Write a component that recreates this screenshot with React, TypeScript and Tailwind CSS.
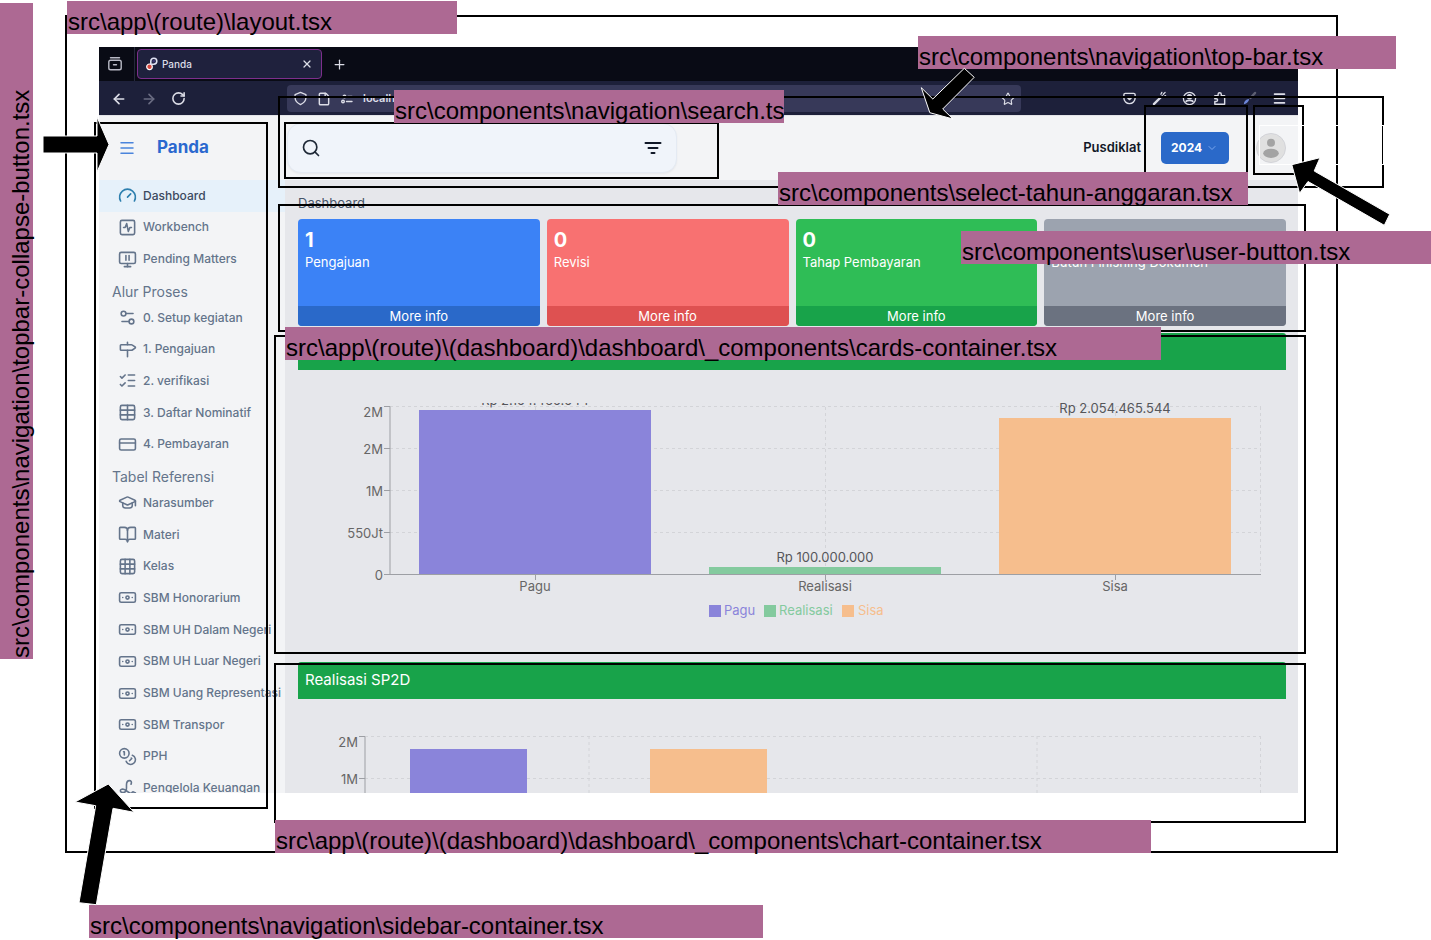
import React from "react";
import {
  ArrowLeft,
  ArrowRight,
  Banknote,
  BookOpen,
  ChevronDown,
  Coins,
  CreditCard,
  File,
  Gauge,
  GraduationCap,
  Grid3x3,
  ListChecks,
  Menu,
  Milestone,
  MonitorPause,
  Plus,
  RotateCw,
  Search,
  Settings2,
  SquareActivity,
  Star,
  Table,
  X,
} from "lucide-react";

type IconType = React.ComponentType<{ size?: number; strokeWidth?: number; className?: string }>;
type NavItem = { label: string; icon: IconType; active?: boolean };

function SignatureIcon({ size = 24, strokeWidth = 2, className }: { size?: number; strokeWidth?: number; className?: string }) {
  return (
    <svg
      width={size}
      height={size}
      viewBox="0 0 24 24"
      fill="none"
      stroke="currentColor"
      strokeWidth={strokeWidth}
      strokeLinecap="round"
      strokeLinejoin="round"
      className={className}
    >
      <path d="M16.500 6.500c1.200-3-.3-4.500-2-4.500-2.800 0-3.800 2.600-3.800 5.500 0 4.500.8 9.500-4.200 9.500-2 0-3.500-.8-3.500-2.200 0-1.600 1.800-2.300 4-1.800 4.500 1 6.500 5.500 9.500 5 1.500-.3 1.500-2 2.500-2s1.300 1.500 3 1.500" />
    </svg>
  );
}

const mainItems: NavItem[] = [
  { label: "Dashboard", icon: Gauge, active: true },
  { label: "Workbench", icon: SquareActivity },
  { label: "Pending Matters", icon: MonitorPause },
];
const processItems: NavItem[] = [
  { label: "0. Setup kegiatan", icon: Settings2 },
  { label: "1. Pengajuan", icon: Milestone },
  { label: "2. verifikasi", icon: ListChecks },
  { label: "3. Daftar Nominatif", icon: Table },
  { label: "4. Pembayaran", icon: CreditCard },
];
const referenceItems: NavItem[] = [
  { label: "Narasumber", icon: GraduationCap },
  { label: "Materi", icon: BookOpen },
  { label: "Kelas", icon: Grid3x3 },
  { label: "SBM Honorarium", icon: Banknote },
  { label: "SBM UH Dalam Negeri", icon: Banknote },
  { label: "SBM UH Luar Negeri", icon: Banknote },
  { label: "SBM Uang Representasi", icon: Banknote },
  { label: "SBM Transpor", icon: Banknote },
  { label: "PPH", icon: Coins },
  { label: "Pengelola Keuangan", icon: SignatureIcon },
];

function NavList({ items, className }: { items: NavItem[]; className: string }) {
  return (
    <ul className={`grid auto-rows-fr ${className}`}>
      {items.map(({ label, icon: Icon, active }) => (
        <li key={label} className="min-h-0">
          <a
            href="#"
            className={`flex h-full items-center gap-[6px] pl-[19px] text-[12px] font-medium whitespace-nowrap ${
              active ? "bg-[#e6f1fa] text-[#3c4a60]" : "text-[#64748b]"
            }`}
          >
            <Icon size={19} strokeWidth={2} className={`shrink-0 ${active ? "text-[#2d7fae]" : ""}`} />
            {label}
          </a>
        </li>
      ))}
    </ul>
  );
}

function NavHeading({ children }: { children: React.ReactNode }) {
  return <h2 className="h-[27px] pt-[7px] pl-[13px] text-[14px] leading-5 text-[#64748b]">{children}</h2>;
}

function Sidebar() {
  return (
    <aside className="w-[186px] shrink-0 bg-[#f3f4f6]">
      <div className="flex h-16 items-center gap-[21px] pl-[19px]">
        <button type="button" aria-label="Collapse sidebar" className="text-[#4a84dc]">
          <Menu size={18} strokeWidth={2} />
        </button>
        <span className="text-[17px] font-bold text-[#2a68cf]">Panda</span>
      </div>
      <nav>
        <NavList items={mainItems} className="h-[95px]" />
        <NavHeading>Alur Proses</NavHeading>
        <NavList items={processItems} className="h-[158px]" />
        <NavHeading>Tabel Referensi</NavHeading>
        <NavList items={referenceItems} className="h-[317px]" />
      </nav>
    </aside>
  );
}

function PandaMark() {
  return (
    <svg width="12" height="14" viewBox="0 0 12 14" fill="none">
      <circle cx="3.500" cy="9.800" r="2.800" fill="#d6453d" stroke="#fff" strokeWidth="1.200" />
      <path d="M4.800 7.500V4a3 3 0 1 1 3 3.200H4.500" stroke="#dfe0f2" strokeWidth="1.600" />
      <circle cx="7.800" cy="4.200" r="1.400" fill="#3b3470" />
    </svg>
  );
}

function BrowserChrome() {
  return (
    <div className="text-[#dcdde7]">
      <div className="flex h-[34px] items-center bg-[#090b15]">
        <div className="flex h-full w-9 items-center justify-center border-r border-[#25283c] pr-[3px]">
          <svg width="16" height="16" viewBox="0 0 16 16" fill="none" stroke="#b9bac6" strokeWidth="1.400" strokeLinecap="round">
            <path d="M3.500 1.800h9M6.500 8.700h3" />
            <rect x="1.800" y="4.300" width="12.400" height="9.500" rx="1.800" />
          </svg>
        </div>
        <div className="ml-[2px] flex h-[30px] w-[185px] items-center gap-1 rounded-[4px] border border-[#7d2f8c] bg-[#1f213d] px-2">
          <PandaMark />
          <span className="grow text-[10px] font-medium">Panda</span>
          <X size={12} strokeWidth={2.5} />
        </div>
        <Plus size={15} strokeWidth={2} className="ml-[10px]" />
      </div>
      <div className="flex h-[34px] items-center bg-[#1d203a] pt-px">
        <div className="flex w-[188px] items-center gap-[14px] pl-3">
          <ArrowLeft size={16} strokeWidth={2.5} />
          <ArrowRight size={16} strokeWidth={2.5} className="text-[#6a6c82]" />
          <RotateCw size={15} strokeWidth={2.5} />
        </div>
        <div className="flex h-[27px] grow items-center gap-[9px] rounded-[4px] bg-[#373959] px-[6px]">
          <svg width="15" height="15" viewBox="0 0 16 16" fill="none" stroke="currentColor" strokeWidth="1.400" strokeLinejoin="round">
            <path d="M8 1.500 13.800 3.800v3.200c0 3.200-2.200 5.800-5.800 7.500C4.400 12.800 2.200 10.200 2.200 7V3.800z" />
          </svg>
          <File size={14} strokeWidth={2.5} />
          <svg width="14" height="10" viewBox="0 0 14 10" fill="none" stroke="currentColor" strokeWidth="1.400" strokeLinecap="round">
            <path d="M8 2.500h4M6.500 7.500H12" />
            <circle cx="4.500" cy="2.500" r="1.300" />
            <circle cx="3" cy="7.500" r="1.300" />
          </svg>
          <span className="grow text-[11px] font-semibold">localhost:3000</span>
          <Star size={14} strokeWidth={2} />
        </div>
        <div className="flex w-[277px] items-center justify-end gap-[15px] pr-[11px]">
          <svg width="15" height="15" viewBox="0 0 16 16" fill="none" stroke="currentColor" strokeWidth="1.500" strokeLinecap="round" strokeLinejoin="round">
            <path d="M3.500 2.500h9A1.500 1.500 0 0 1 14 4v3.500a6 6 0 0 1-12 0V4a1.500 1.500 0 0 1 1.500-1.500zM5.200 6.500 8 9.200l2.800-2.700" />
          </svg>
          <svg width="15" height="15" viewBox="0 0 16 16" fill="none" stroke="currentColor" strokeLinecap="round">
            <path d="M2 14 9.500 6.500" strokeWidth="2.400" />
            <path d="M9 7 11 5M9.500 3.500 10.500 1.500M12.500 6l2-1M12 3.500 14 1.500" strokeWidth="1.400" />
          </svg>
          <svg width="15" height="15" viewBox="0 0 16 16" fill="none" stroke="currentColor" strokeWidth="1.400">
            <circle cx="8" cy="8" r="6.500" />
            <circle cx="8" cy="6" r="2.200" fill="currentColor" />
            <path d="M4 11.500c1-2 7-2 8 0" strokeWidth="2" />
          </svg>
          <svg width="15" height="15" viewBox="0 0 16 16" fill="none" stroke="currentColor" strokeWidth="1.500" strokeLinejoin="round">
            <path d="M3 5h3.500V3.500a1.700 1.700 0 0 1 3.400 0V5H13.500v9.200H3v-3h1.500a1.500 1.500 0 0 0 0-3H3z" />
          </svg>
          <svg width="15" height="15" viewBox="0 0 16 16" fill="none" strokeLinecap="round">
            <path d="M9 7.500 14 2" stroke="#5d5f72" strokeWidth="2.400" />
            <path d="M2 14c0-3 2-5 5.500-5.500C7.500 11 5 13.500 2 14z" fill="#6d86d8" />
          </svg>
          <Menu size={15} strokeWidth={2.5} />
        </div>
      </div>
    </div>
  );
}

function TopBar() {
  return (
    <header className="flex h-16 items-center bg-[#f3f4f6] pr-3 pl-[2px]">
      <form className="flex h-[50px] w-[390px] items-center rounded-[14px] border border-[#e4eaf3] bg-[#f0f4fa] px-[13px] shadow-xs">
        <Search size={20} strokeWidth={2} className="text-[#1f2937]" />
        <input type="search" aria-label="Search" className="min-w-0 grow bg-transparent px-3 text-[13px] outline-none" />
        <button type="button" aria-label="Filter">
          <svg width="20" height="20" viewBox="0 0 20 20" stroke="#111827" strokeWidth="2" strokeLinecap="round">
            <path d="M2.500 5h15M5.500 10h9M8.500 15h3" />
          </svg>
        </button>
      </form>
      <span className="ml-auto text-[13px] font-semibold text-[#111827]">Pusdiklat</span>
      <div className="relative ml-5">
        <select
          aria-label="Tahun anggaran"
          defaultValue="2024"
          className="block h-8 w-[68px] appearance-none rounded-[5px] bg-[#2a69c9] pl-[10px] text-[12px] font-bold text-white"
        >
          <option>2024</option>
          <option>2023</option>
        </select>
        <ChevronDown size={12} className="pointer-events-none absolute top-[10px] right-[11px] text-[#7ba7ee]" />
      </div>
      <button type="button" aria-label="User menu" className="ml-[27px]">
        <svg width="30" height="30" viewBox="0 0 30 30">
          <circle cx="15" cy="15" r="14.500" fill="#e0e0e0" stroke="#d2d3d8" />
          <circle cx="15" cy="9.800" r="4" fill="#a3a3a3" />
          <ellipse cx="15" cy="20.300" rx="7.800" ry="4.600" fill="#a3a3a3" />
        </svg>
      </button>
    </header>
  );
}

const cards = [
  { value: "1", label: "Pengajuan", body: "bg-[#3b82f6]", foot: "bg-[#2a69c9]" },
  { value: "0", label: "Revisi", body: "bg-[#f87171]", foot: "bg-[#de5151]" },
  { value: "0", label: "Tahap Pembayaran", body: "bg-[#2fbd56]", foot: "bg-[#18a34a]" },
  { value: "0", label: "Butuh Finishing Dokumen", body: "bg-[#9ca3af]", foot: "bg-[#6b7280]" },
];

function CardsContainer() {
  return (
    <section className="grid grid-cols-4 gap-[7px]">
      {cards.map((c) => (
        <article key={c.label} className={`flex h-[107px] flex-col overflow-hidden rounded-[4px] text-white ${c.body}`}>
          <div className="grow px-[7px] pt-[9px]">
            <p className="text-[20px] leading-6 font-bold">{c.value}</p>
            <p className="text-[13px] leading-5">{c.label}</p>
          </div>
          <a href="#" className={`block text-center text-[13px] leading-5 ${c.foot}`}>
            More info
          </a>
        </article>
      ))}
    </section>
  );
}

function BudgetChart() {
  const bars = [
    { name: "Pagu", x: 121, top: 7, fill: "#8a84da", value: "Rp 2.154.465.544" },
    { name: "Realisasi", x: 411, top: 164, fill: "#84ca9e", value: "Rp 100.000.000" },
    { name: "Sisa", x: 701, top: 15, fill: "#f6be8d", value: "Rp 2.054.465.544" },
  ];
  const ticks = [
    { y: 4, ty: 14, label: "2M" },
    { y: 46, ty: 51, label: "2M" },
    { y: 88, ty: 93, label: "1M" },
    { y: 130, ty: 135, label: "550Jt" },
    { y: 172, ty: 177, label: "0" },
  ];
  return (
    <svg viewBox="0 0 988 252" className="block w-full overflow-hidden text-[13px]">
      <g stroke="#d3d4d8" strokeDasharray="3 3">
        {ticks.map((t) => (
          <path key={t.y} d={`M92 ${t.y - 0.5}H963`} />
        ))}
        <path d="M237.500 4V172M527.500 4V172M817.500 4V172M962.500 4V172" />
      </g>
      <g fill="#666">
        {ticks.map((t) => (
          <text key={t.y} x="85" y={t.ty} textAnchor="end">
            {t.label}
          </text>
        ))}
      </g>
      {bars.map((b) => (
        <g key={b.name}>
          <rect x={b.x} y={b.top} width="232" height={172 - b.top} fill={b.fill} />
          <text x={b.x + 116} y={b.top - 5} textAnchor="middle" fill="#55565a">
            {b.value}
          </text>
          <text x={b.x + 116} y="188" textAnchor="middle" fill="#666">
            {b.name}
          </text>
        </g>
      ))}
      <path
        d="M92 3.500V172M86 3.500h6M86 45.500h6M86 87.500h6M86 129.500h6M86 171.500H963M237.500 172v5M527.500 172v5M817.500 172v5"
        stroke="#9d9fa4"
        fill="none"
      />
      <g>
        <rect x="411" y="202" width="12" height="12" fill="#8a84da" />
        <text x="426" y="212" fill="#8a84da">Pagu</text>
        <rect x="466" y="202" width="12" height="12" fill="#84ca9e" />
        <text x="481" y="212" fill="#84ca9e">Realisasi</text>
        <rect x="544" y="202" width="12" height="12" fill="#f6be8d" />
        <text x="560" y="212" fill="#f6be8d">Sisa</text>
      </g>
    </svg>
  );
}

function Sp2dChart() {
  return (
    <svg viewBox="0 0 988 200" className="block w-full text-[13px]">
      <g stroke="#d3d4d8" strokeDasharray="3 3">
        <path d="M67 4.500H963M67 46.500H963M67 88.500H963M291 4V172M739 4V172M962.500 4V172" />
      </g>
      <rect x="112" y="17" width="117" height="155" fill="#8a84da" />
      <rect x="352" y="17" width="117" height="155" fill="#f6be8d" />
      <path d="M67 4.500V172M61 4.500h6M61 46.500h6M61 88.500h6" stroke="#9d9fa4" />
      <g fill="#666" textAnchor="end">
        <text x="60" y="15">2M</text>
        <text x="60" y="52">1M</text>
      </g>
    </svg>
  );
}

function ChartContainer({ title, children }: { title?: string; children: React.ReactNode }) {
  return (
    <section>
      <h2 className="h-[37px] rounded-t-[3px] bg-[#18a34a] pl-[7px] text-[15px] leading-9 text-white">{title}</h2>
      <div className="pt-[33px]">{children}</div>
    </section>
  );
}

function Frame({ className }: { className: string }) {
  return <div className={`pointer-events-none absolute border-2 border-black ${className}`} />;
}

function PathLabel({ className, children }: { className: string; children: React.ReactNode }) {
  return (
    <div
      className={`absolute flex h-[33px] items-end bg-[#ad6993] pl-px text-[24px] leading-6 whitespace-nowrap text-black ${className}`}
    >
      {children}
    </div>
  );
}

function Arrow({ className, width, height, points }: { className: string; width: number; height: number; points: string }) {
  return (
    <svg
      width={width}
      height={height}
      viewBox={`0 0 ${width} ${height}`}
      className={`pointer-events-none absolute overflow-visible ${className}`}
    >
      <polygon points={points} fill="#000" stroke="#fff" strokeWidth="1" />
    </svg>
  );
}

function Annotations() {
  return (
    <div className="font-['Liberation_Sans',Arial,sans-serif]">
      <Frame className="top-[15px] right-[93px] left-[65px] h-[838px]" />
      <Frame className="top-[96px] right-[47px] left-[278px] h-[92px]" />
      <Frame className="top-[122px] left-[94px] h-[687px] w-[174px]" />
      <Frame className="top-[122px] left-[284px] h-[57px] w-[435px]" />
      <Frame className="top-[105px] right-[183px] h-[90px] w-[104px]" />
      <Frame className="top-[105px] right-[127px] h-[70px] w-[51px]" />
      <Frame className="top-[204px] right-[125px] left-[278px] h-[128px]" />
      <Frame className="top-[335px] right-[125px] left-[274px] h-[319px]" />
      <Frame className="top-[663px] right-[125px] left-[274px] h-[160px]" />
      <div className="pointer-events-none absolute top-[125px] right-[47px] h-[40px] w-[125px] border border-white" />

      <PathLabel className="top-[1px] left-[67px] w-[390px]">src\app\(route)\layout.tsx</PathLabel>
      <PathLabel className="top-[36px] right-[35px] w-[478px]">src\components\navigation\top-bar.tsx</PathLabel>
      <PathLabel className="top-[90px] left-[394px] w-[390px]">src\components\navigation\search.ts</PathLabel>
      <PathLabel className="top-[172px] right-[183px] w-[470px]">src\components\select-tahun-anggaran.tsx</PathLabel>
      <PathLabel className="top-[231px] right-0 w-[470px]">src\components\user\user-button.tsx</PathLabel>
      <PathLabel className="top-[327px] left-[285px] w-[876px]">
        src\app\(route)\(dashboard)\dashboard\_components\cards-container.tsx
      </PathLabel>
      <PathLabel className="top-[820px] left-[275px] w-[876px]">
        src\app\(route)\(dashboard)\dashboard\_components\chart-container.tsx
      </PathLabel>
      <PathLabel className="top-[905px] left-[89px] w-[674px]">src\components\navigation\sidebar-container.tsx</PathLabel>
      <PathLabel className="top-[659px] left-0 w-[656px] origin-top-left -rotate-90">
        src\components\navigation\topbar-collapse-button.tsx
      </PathLabel>

      <Arrow className="top-[116px] left-[43px]" width={67} height={58} points="0,20 54,20 54,1 66,28.500 54,56 54,37 0,37" />
      <Arrow
        className="top-[68px] right-[456px]"
        width={54}
        height={52}
        points="0.300,19.700 11.800,31 43.300,0.300 53.200,9.300 21.700,41 32,51 8.800,44.700"
      />
      <Arrow
        className="top-[157px] right-[40px]"
        width={100}
        height={70}
        points="0.800,7.700 29,0.700 23.200,14 98.700,57.300 93.300,68.300 17,24.500 8.600,36.300"
      />
      <Arrow
        className="top-[784px] left-[75px]"
        width={60}
        height={121}
        points="33.300,0 59,28.300 38,24.300 21.300,120.700 4,118.700 20.700,21.700 0,18"
      />
    </div>
  );
}

export default function App() {
  return (
    <div className="relative min-h-screen overflow-hidden bg-white pt-[47px] font-[Inter,sans-serif]">
      <div className="mr-[133px] ml-[99px] h-[746px] overflow-hidden">
        <BrowserChrome />
        <div className="flex border-t border-[#e3e4e8] bg-[#f3f4f6]">
          <Sidebar />
          <div className="min-w-0 grow">
            <TopBar />
            <main className="flex flex-col gap-[7px] bg-[#e6e7eb] pr-3 pl-[13px]">
              <p className="-mb-[7px] h-[39px] pt-[13px] text-[13px] leading-5 text-[#475569]">Dashboard</p>
              <CardsContainer />
              <ChartContainer>
                <BudgetChart />
              </ChartContainer>
              <ChartContainer title="Realisasi SP2D">
                <Sp2dChart />
              </ChartContainer>
            </main>
          </div>
        </div>
      </div>
      <Annotations />
    </div>
  );
}
